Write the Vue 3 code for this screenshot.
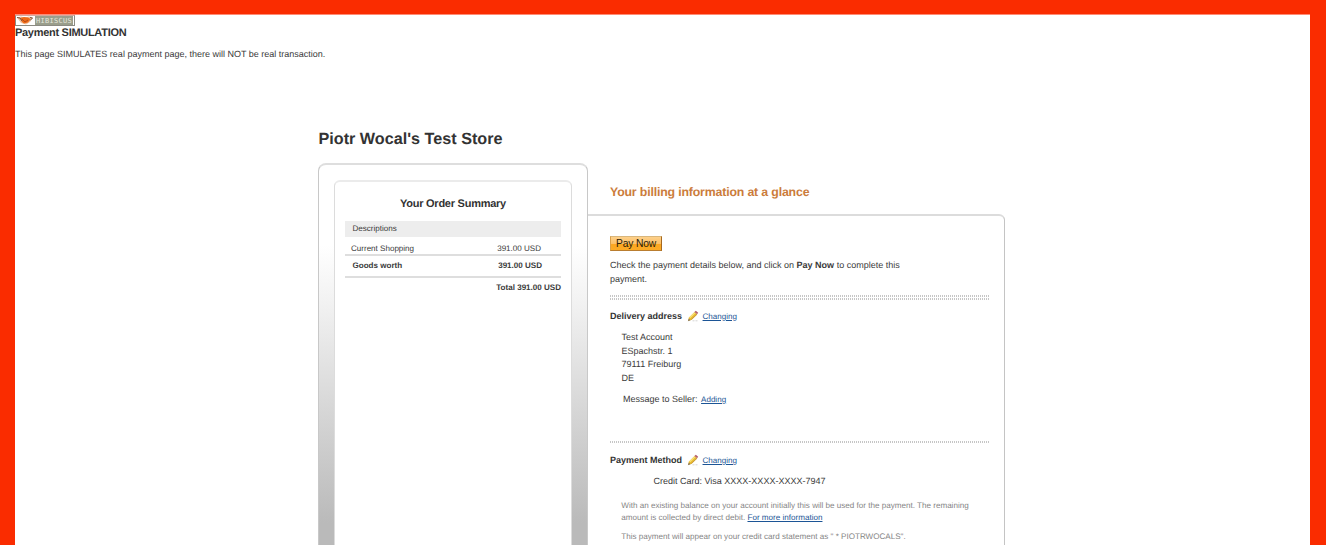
<script setup>
const address = ['Test Account', 'ESpachstr. 1', '79111 Freiburg', 'DE']
</script>

<template>
  <div class="page">
    <div class="badge">
      <svg class="flower" width="18" height="9" viewBox="0 0 18 9">
        <path d="M1 1.5 L5 .5 L9 1.5 L13 .5 L17 1.5 L14 6 L10 8.5 L5 7 Z" fill="#f0c3a2" />
        <path d="M4 2 L8 1 L12 1.5 L14.5 3 L12 6.5 L8 7.5 L6 6 Z" fill="#ee6c18" />
        <path d="M1 1.5 L4 2 L6 5 M14 1.5 L16.5 2 L14 4.5" stroke="#7a5442" stroke-width="1" fill="none" />
        <path d="M6 3 L9 6 L12 4" stroke="#a8421a" stroke-width=".8" fill="none" />
      </svg>
      <span class="badge-name">HIBISCUS</span>
    </div>
    <h1 class="sim">Payment SIMULATION</h1>
    <p class="note">This page SIMULATES real payment page, there will NOT be real transaction.</p>

    <main class="checkout">
      <h2 class="store">Piotr Wocal's Test Store</h2>
      <div class="columns">
        <aside class="outer">
          <div class="summary">
            <h3>Your Order Summary</h3>
            <div class="row head">Descriptions</div>
            <div class="row item"><span>Current Shopping</span><span>391.00 USD</span></div>
            <div class="row goods"><span>Goods worth</span><span>391.00 USD</span></div>
            <div class="row total">Total 391.00 USD</div>
          </div>
        </aside>

        <section class="billing">
          <h3 class="glance">Your billing information at a glance</h3>
          <div class="panel">
            <button class="pay">Pay Now</button>
            <p class="check">Check the payment details below, and click on <b>Pay Now</b> to complete this<br>payment.</p>
            <div class="dots first"></div>
            <div class="dots second"></div>

            <div class="label delivery">
              <b>Delivery address</b>
              <svg class="pencil" width="12" height="12" viewBox="0 0 12 12">
                <path d="M1 11 L2 7.5 L7.5 2 L10.2 4.4 L4.8 9.8 Z" fill="#e9b92f" />
                <path d="M2.8 7.8 L7.9 2.8" stroke="#f8e27c" stroke-width="1.3" />
                <path d="M4.3 9.6 L10 4.2" stroke="#b98e48" stroke-width=".7" />
                <path d="M7.4 2 L8.8 .7 L11.2 2.8 L10.1 4.3 Z" fill="#b5606a" />
                <path d="M.9 11.2 L1.7 8.6 L3.6 10.3 Z" fill="#8a7960" />
                <path d="M5.5 10.8 H11" stroke="#ccc" stroke-width=".8" stroke-dasharray="2 1" />
              </svg>
              <a>Changing</a>
            </div>
            <div class="address">
              <div v-for="line in address" :key="line">{{ line }}</div>
            </div>
            <div class="message"><span>Message to Seller:</span><a>Adding</a></div>
            <div class="dots third"></div>

            <div class="label method">
              <b>Payment Method</b>
              <svg class="pencil" width="12" height="12" viewBox="0 0 12 12">
                <path d="M1 11 L2 7.5 L7.5 2 L10.2 4.4 L4.8 9.8 Z" fill="#e9b92f" />
                <path d="M2.8 7.8 L7.9 2.8" stroke="#f8e27c" stroke-width="1.3" />
                <path d="M4.3 9.6 L10 4.2" stroke="#b98e48" stroke-width=".7" />
                <path d="M7.4 2 L8.8 .7 L11.2 2.8 L10.1 4.3 Z" fill="#b5606a" />
                <path d="M.9 11.2 L1.7 8.6 L3.6 10.3 Z" fill="#8a7960" />
                <path d="M5.5 10.8 H11" stroke="#ccc" stroke-width=".8" stroke-dasharray="2 1" />
              </svg>
              <a>Changing</a>
            </div>
            <div class="card">Credit Card: Visa XXXX-XXXX-XXXX-7947</div>
            <p class="fine">With an existing balance on your account initially this will be used for the payment. The remaining<br>amount is collected by direct debit. <a>For more information</a></p>
            <p class="fine statement">This payment will appear on your credit card statement as " * PIOTRWOCALS".</p>
          </div>
        </section>
      </div>
    </main>
  </div>
</template>

<style>
html, body { margin: 0; overflow: hidden; }
</style>

<style scoped>
.page {
  box-sizing: border-box;
  width: 1326px;
  height: 545px;
  overflow: hidden;
  border: solid #fa2c00;
  border-width: 14px 16px 0 15px;
  background: linear-gradient(#ff8b75 0 1px, #fff 1px) padding-box;
  font-family: "Liberation Sans", Arial, sans-serif;
  font-size: 9px;
  color: #3a3a3a;
  text-rendering: geometricPrecision;
}
h1, h2, h3, p { margin: 0; white-space: nowrap; }
a { color: #1c5596; text-decoration: underline; font-size: 8.05px; }
.badge {
  box-sizing: border-box;
  display: flex;
  align-items: center;
  width: 60px;
  height: 11px;
  border: 1px solid #8b8b83;
  border-top-color: #d3a89d;
  background: #fff;
  position: relative;
  top: .5px;
}
.flower { flex: none; }
.badge-name {
  flex: none;
  width: 38px;
  height: 9px;
  margin-left: 1px;
  background: #9a9e8c;
  color: #e4e6dc;
  font: 7px/10px "DejaVu Sans Mono", monospace;
  letter-spacing: .3px;
  text-align: center;
}
.sim { margin-top: 2px; font-size: 11px; letter-spacing: -.29px; line-height: 13px; color: #333; }
.note { margin-top: 8px; line-height: 13px; }
.checkout { width: 687px; margin: 68px 0 0 303px; }
.store { padding-left: .5px; font-size: 16.2px; line-height: 20px; color: #333; }
.columns { display: flex; margin-top: 14px; }
.outer {
  box-sizing: border-box;
  flex: none;
  width: 270px;
  height: 420px;
  padding: 15px 15px 0;
  border: 1px solid #c8c8c8;
  border-top: 2px solid #dedede;
  border-radius: 8px;
  background: linear-gradient(#fff 0, #fff 80px, #f2f2f2 137px, #d9d9d9 235px, #bababa 358px);
}
.summary {
  box-sizing: border-box;
  height: 420px;
  padding: 14px 10px 0;
  border: 1px solid #dcdcdc;
  border-top: 2px solid #ebebeb;
  border-radius: 6px;
  background: #fff;
  font-size: 8.05px;
}
.summary h3 { font-size: 11px; letter-spacing: -.25px; line-height: 16px; text-align: center; color: #333; }
.row { box-sizing: border-box; display: flex; justify-content: space-between; }
.head { height: 16px; margin-top: 9px; padding-left: 7.5px; background: #ededed; line-height: 15px; }
.item { height: 19px; padding: 4px 20px 0 6px; border-bottom: 2px solid #dedede; line-height: 15px; }
.goods { height: 22px; padding: 2px 19px 0 7.5px; border-bottom: 2px solid #dedede; line-height: 15px; font-weight: bold; }
.total { justify-content: flex-end; padding-top: 2px; line-height: 15px; font-weight: bold; }
.billing { flex: 1; }
.glance { height: 51px; padding-left: 22px; font-size: 12.3px; letter-spacing: -.15px; line-height: 59px; color: #cb7c3b; }
.panel {
  box-sizing: border-box;
  height: 400px;
  padding: 20px 15px 0 22px;
  border: solid #c4c4c4;
  border-width: 2px 1px 0 0;
  border-top-color: #dcdcdc;
  border-radius: 0 6px 0 0;
}
.pay {
  display: block;
  box-sizing: border-box;
  width: 52px;
  height: 15px;
  padding: 0;
  border: 1px solid;
  border-color: #d9b67c #a6691f #b97d30 #d9a04c;
  background: linear-gradient(#fdd08a 0, #fdc168 50%, #fba621 51%, #fdab25);
  font: 10.3px/13px "Liberation Sans", Arial, sans-serif;
  letter-spacing: -.15px;
  color: #2a1c08;
}
.check { margin-top: 7px; line-height: 14px; }
.dots { height: 2px; background: repeating-linear-gradient(90deg, #c6c6c6 0 1px, #fff 1px 2px); }
.first { margin-top: 9px; }
.second { margin-top: 1px; }
.label { display: flex; align-items: center; height: 14px; color: #333; }
.label .pencil { margin: 0 3.5px 0 5px; }
.delivery { margin-top: 9px; }
.address { margin-top: 8px; padding-left: 11.5px; line-height: 13.6px; }
.message { display: flex; align-items: center; height: 14px; margin: 7px 0 0 13px; }
.message a { margin-left: 3.5px; }
.third { margin-top: 35px; }
.method { margin-top: 10px; }
.card { margin: 7px 0 0 43.5px; line-height: 14px; }
.fine { margin: 11.5px 0 0 11.3px; font-size: 8.09px; line-height: 12px; color: #858585; }
.fine a { font-size: 8.09px; }
.statement { margin-top: 7px; }
</style>
